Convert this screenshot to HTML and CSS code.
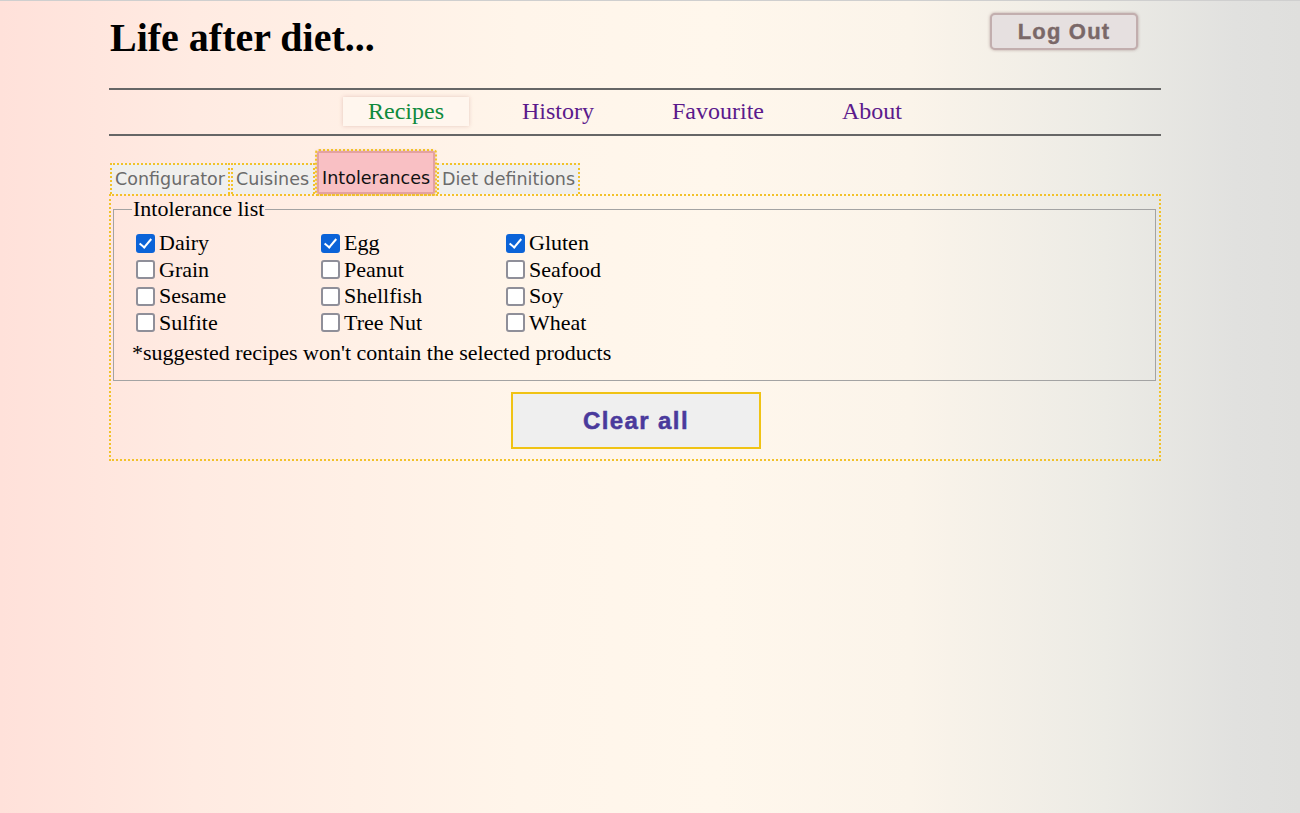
FILE: index.html
```html
<!DOCTYPE html>
<html>
<head>
<meta charset="utf-8">
<link rel="stylesheet" href="styles.css">
</head>
<body>
<div class="page">
  <header class="header">
    <h1 class="title">Life after diet...</h1>
    <button class="logout">Log Out</button>
  </header>
  <nav class="nav">
    <a class="nav-item active">Recipes</a>
    <a class="nav-item">History</a>
    <a class="nav-item">Favourite</a>
    <a class="nav-item">About</a>
  </nav>
  <div class="tabs">
    <div class="tab">Configurator</div>
    <div class="tab">Cuisines</div>
    <div class="tab tab-active">Intolerances</div>
    <div class="tab">Diet definitions</div>
  </div>
  <div class="panel">
    <fieldset class="list">
      <legend>Intolerance list</legend>
      <div class="grid">
        <label class="item"><span class="cb on"></span>Dairy</label>
        <label class="item"><span class="cb on"></span>Egg</label>
        <label class="item"><span class="cb on"></span>Gluten</label>
        <label class="item"><span class="cb"></span>Grain</label>
        <label class="item"><span class="cb"></span>Peanut</label>
        <label class="item"><span class="cb"></span>Seafood</label>
        <label class="item"><span class="cb"></span>Sesame</label>
        <label class="item"><span class="cb"></span>Shellfish</label>
        <label class="item"><span class="cb"></span>Soy</label>
        <label class="item"><span class="cb"></span>Sulfite</label>
        <label class="item"><span class="cb"></span>Tree Nut</label>
        <label class="item"><span class="cb"></span>Wheat</label>
      </div>
      <p class="note">*suggested recipes won't contain the selected products</p>
    </fieldset>
    <div class="actions">
      <button class="clear">Clear all</button>
    </div>
  </div>
</div>
</body>
</html>
```
FILE: styles.css
```css
html, body {
  margin: 0;
  padding: 0;
  height: 100%;
}
body {
  background: linear-gradient(to right, #ffe1da 0%, #ffebe2 15%, #fff5ea 40%, #fff7ec 55%, #fbf4ea 70%, #ecebe5 85%, #e1e1df 95%, #dfdfdd 100%);
  border-top: 1px solid #cfcfcf;
  box-sizing: border-box;
  font-family: "Liberation Serif", "Times New Roman", serif;
}
.page {
  width: 1052px;
  margin-left: 109px;
}
.header {
  display: flex;
  justify-content: space-between;
  align-items: flex-start;
  height: 87px;
}
.title {
  margin: 15px 0 0 1px;
  font-size: 40px;
  font-weight: bold;
  line-height: 44px;
}
.logout {
  margin: 12px 23px 0 0;
  width: 148px;
  height: 37px;
  background: #e6e0e0;
  border: 2px solid #c2aeae;
  border-radius: 5px;
  box-shadow: 0 0 3px rgba(120, 80, 80, 0.5);
  font-family: "Liberation Sans", Arial, sans-serif;
  font-weight: bold;
  font-size: 22px;
  letter-spacing: 1.2px;
  -webkit-text-stroke: 0.4px #7a6868;
  color: #7a6868;
  padding: 0;
}
.nav {
  border-top: 2px solid #666;
  border-bottom: 2px solid #666;
  height: 44px;
  display: flex;
  align-items: flex-start;
  padding-left: 234px;
}
.nav-item {
  font-size: 24px;
  color: #5b1a8c;
  line-height: 29px;
  margin-top: 7px;
  width: 126px;
  text-align: center;
}
.nav-item:nth-child(2) { margin-left: 26px; }
.nav-item:nth-child(3) { margin-left: 34px; }
.nav-item:nth-child(4) { margin-left: 28px; }
.nav-item.active {
  color: #0f8a3c;
  background: #fff6ee;
  box-shadow: 0 0 4px rgba(200, 150, 140, 0.45);
}
.tabs {
  display: flex;
  align-items: flex-end;
  margin-top: 15px;
  padding-left: 1px;
}
.tab {
  font-family: "DejaVu Sans", Tahoma, sans-serif;
  font-size: 17.5px;
  color: #6b6b6b;
  background: #f0efed;
  border: 2px dotted #f2c22a;
  border-bottom: none;
  height: 29px;
  line-height: 29px;
  padding: 0 3px;
  margin-right: 1px;
}
.tab:nth-child(2) { padding-right: 4px; }
.tab-active {
  color: #111;
  background: #f9c0c4;
  border: 2px solid #e3a2a2;
  outline: 2px dotted #f2c22a;
  height: 39px;
  line-height: 51px;
  box-shadow: 0 0 3px rgba(200, 120, 120, 0.6);
  border-radius: 2px;
  margin-left: 1px;
}
.tab:last-child { margin-left: 1px; }
.panel {
  border: 2px dotted #f2c22a;
  padding: 0 3px 10px 2px;
}
.list {
  margin: 0;
  border: 1px solid #a3a3a3;
  padding: 2px 0 14px 18px;
}
.list legend {
  font-size: 22px;
  padding: 0 1px;
  margin-left: 0;
}
.grid {
  display: grid;
  grid-template-columns: 185px 185px 185px;
  margin-top: 6px;
}
.item {
  display: flex;
  align-items: center;
  font-size: 22px;
  height: 26.5px;
}
.cb {
  width: 19px;
  height: 19px;
  border: 2px solid #8f8f99;
  border-radius: 3px;
  box-sizing: border-box;
  margin: 0 4px 0 4px;
  background: #fff;
  position: relative;
}
.cb.on {
  background: #0b63d8;
  border-color: #0b63d8;
}
.cb.on::after {
  content: "";
  position: absolute;
  left: 4px;
  top: 0px;
  width: 5px;
  height: 10px;
  border: solid #fff;
  border-width: 0 2.5px 2.5px 0;
  transform: rotate(40deg);
}
.note {
  margin: 4px 0 0 0;
  font-size: 22px;
}
.actions {
  display: flex;
  justify-content: center;
  margin-top: 11px;
}
.clear {
  width: 250px;
  height: 57px;
  background: #efefef;
  border: 2px solid #f0c314;
  font-family: "Liberation Sans", Arial, sans-serif;
  font-weight: bold;
  font-size: 24px;
  letter-spacing: 1.4px;
  -webkit-text-stroke: 0.5px #4a3a9c;
  color: #4a3a9c;
  padding: 0;
  margin-left: 3px;
}
```
